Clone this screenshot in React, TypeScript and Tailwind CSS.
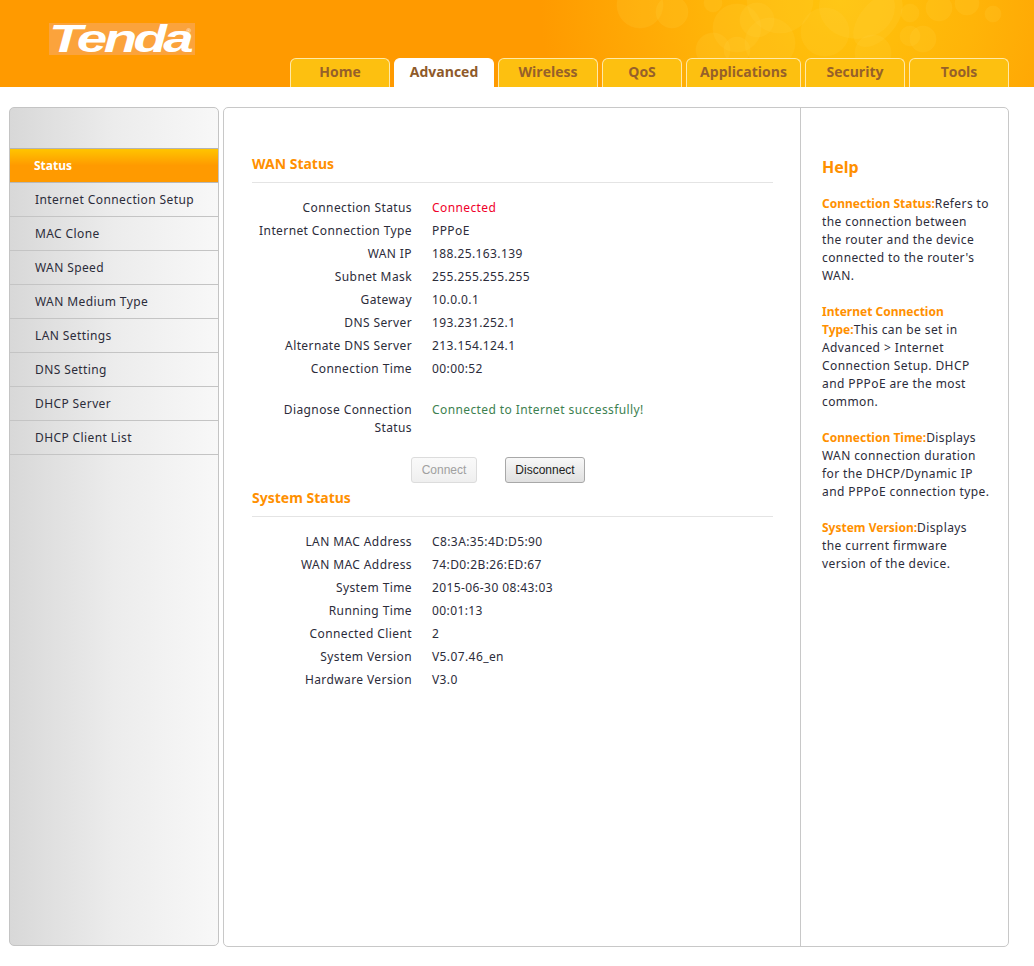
import React from "react";

const tabs = [
  { name: "Home", w: "w-[100px]" },
  { name: "Advanced", w: "w-[100px]", active: true },
  { name: "Wireless", w: "w-[100px]" },
  { name: "QoS", w: "w-[80px]" },
  { name: "Applications", w: "w-[115px]" },
  { name: "Security", w: "w-[100px]" },
  { name: "Tools", w: "w-[100px]" },
];

const menu = [
  "Internet Connection Setup",
  "MAC Clone",
  "WAN Speed",
  "WAN Medium Type",
  "LAN Settings",
  "DNS Setting",
  "DHCP Server",
  "DHCP Client List",
];

// cx, cy, r of the pale rings in the header artwork
const bubbles = [
  [640, 5, 23], [672, 12, 16], [737, 28, 24], [757, 20, 17], [713, 50, 17], [737, 50, 13], [770, 43, 25],
  [825, 32, 24], [780, 0, 33], [873, 53, 18], [910, 13, 9], [939, 8, 13], [967, 3, 12], [993, 14, 8],
  [910, 36, 10], [923, 39, 13], [713, 3, 9],
];

const Row = ({ label, children }: { label: string; children: React.ReactNode }) => (
  <div className="flex h-[23px] items-center">
    <div className="w-[160px] text-right">{label}</div>
    <div className="ml-5">{children}</div>
  </div>
);

const Heading = ({ title }: { title: string }) => (
  <h2 className="h-[26px] border-b border-[#e4e4e4] text-[14px] font-bold leading-[14px] tracking-normal text-[#ff9000]">{title}</h2>
);

const HelpItem = ({ title, children }: { title: string; children: React.ReactNode }) => (
  <p className="mb-[18px]">
    <span className="font-bold tracking-normal text-[#ff9000]">{title}</span>
    {children}
  </p>
);

export default function App() {
  return (
    <div className="h-[966px] w-[1034px] overflow-hidden bg-white font-['Noto_Sans',sans-serif] text-[12px] tracking-[0.4px] text-[#2c2c3a]">
      <header className="relative flex h-[87px] items-end bg-[#ff9a00] pl-[290px]">
        <svg className="absolute inset-0" width="1034" height="87" viewBox="0 0 1034 87">
          <defs>
            <radialGradient id="glow" cx="840" cy="0" r="300" gradientUnits="userSpaceOnUse" gradientTransform="translate(0 0) scale(1 1)">
              <stop offset="0" stopColor="#ffc40c" />
              <stop offset="0.45" stopColor="#ffb408" />
              <stop offset="1" stopColor="#ff9a00" />
            </radialGradient>
          </defs>
          <rect width="1034" height="87" fill="url(#glow)" />
          <ellipse cx="857" cy="7" rx="38" ry="32" fill="#ffd23a" opacity="0.22" />
          <ellipse cx="878" cy="20" rx="18" ry="32" transform="rotate(40 878 20)" fill="#ffd23a" opacity="0.2" />
          {bubbles.map(([cx, cy, r], i) => (
            <circle key={i} cx={cx} cy={cy} r={r} fill="#ffd23a" opacity="0.2" stroke="#ffd65a" strokeOpacity="0.4" />
          ))}
        </svg>
        <div className="absolute left-[49px] top-[23px] flex h-[32px] w-[146px] items-center bg-[#fba33c]">
          <span className="origin-left scale-x-[1.44] font-['Liberation_Sans',sans-serif] text-[38px] font-bold italic leading-none tracking-[-2.5px] text-white">
            Tenda
          </span>
          <span className="absolute right-[4px] top-[5px] font-['Liberation_Sans',sans-serif] text-[6px] leading-none tracking-normal text-white">®</span>
        </div>
        <nav className="relative flex gap-[4px]">
          {tabs.map((t) => (
            <a
              key={t.name}
              className={`flex h-[29px] items-center justify-center rounded-t-[6px] border border-b-0 pb-[3px] font-['Open_Sans',sans-serif] text-[14px] font-bold tracking-normal ${t.w} ${
                t.active ? "border-white bg-white text-[#8e5a2a]" : "border-[#ffe9a8] bg-[#fdc010] text-[#96602a]"
              }`}
            >
              {t.name}
            </a>
          ))}
        </nav>
      </header>

      <div className="mt-[20px] flex gap-[4px] pl-[9px]">
        <aside className="flex h-[839px] w-[210px] flex-col overflow-hidden rounded-[5px] border border-[#c4c4c4] bg-gradient-to-r from-[#d8d8d8] via-[#ececec] to-[#f8f8f8]">
          <div className="h-[41px] border-b border-[#b4b4b4]" />
          <div className="flex h-[34px] items-center border-b border-[#b8b8b8] bg-gradient-to-b from-[#ffc400] via-[#ff9a00] to-[#ff9a00] pl-[24px] font-bold tracking-normal text-white">
            Status
          </div>
          {menu.map((m) => (
            <div key={m} className="flex h-[34px] items-center border-b border-[#c4c4c4] pl-[25px]">
              {m}
            </div>
          ))}
        </aside>

        <main className="flex h-[840px] w-[786px] rounded-[5px] border border-[#c8c8c8]">
          <section className="w-[576px] pl-[28px] pt-[49px]">
            <div className="w-[521px]">
              <Heading title="WAN Status" />
              <div className="mt-[13px]">
                <Row label="Connection Status"><span className="text-[#f0002a]">Connected</span></Row>
                <Row label="Internet Connection Type">PPPoE</Row>
                <Row label="WAN IP">188.25.163.139</Row>
                <Row label="Subnet Mask">255.255.255.255</Row>
                <Row label="Gateway">10.0.0.1</Row>
                <Row label="DNS Server">193.231.252.1</Row>
                <Row label="Alternate DNS Server">213.154.124.1</Row>
                <Row label="Connection Time">00:00:52</Row>
              </div>
              <div className="mt-[21px] flex leading-[18px]">
                <div className="w-[160px] text-right">Diagnose Connection Status</div>
                <div className="ml-5 text-[#3d7f50]">Connected to Internet successfully!</div>
              </div>
              <div className="mt-[20px] flex pl-[159px] font-['Liberation_Sans',sans-serif] tracking-normal">
                <button className="h-[26px] w-[66px] rounded-[3px] border border-[#dcdcdc] bg-gradient-to-b from-[#fafafa] to-[#efefef] text-[#a0a0a0]">
                  Connect
                </button>
                <button className="ml-[28px] h-[26px] w-[80px] rounded-[3px] border border-[#a8a8a8] bg-gradient-to-b from-[#f8f8f8] to-[#e0e0e0] text-[#222]">
                  Disconnect
                </button>
              </div>
              <div className="mt-[8px]">
                <Heading title="System Status" />
              </div>
              <div className="mt-[13px]">
                <Row label="LAN MAC Address">C8:3A:35:4D:D5:90</Row>
                <Row label="WAN MAC Address">74:D0:2B:26:ED:67</Row>
                <Row label="System Time">2015-06-30 08:43:03</Row>
                <Row label="Running Time">00:01:13</Row>
                <Row label="Connected Client">2</Row>
                <Row label="System Version">V5.07.46_en</Row>
                <Row label="Hardware Version">V3.0</Row>
              </div>
            </div>
          </section>
          <section className="flex-1 border-l border-[#c8c8c8] pl-[21px] pr-[18px] pt-[49px] leading-[18px]">
            <h2 className="mb-[18px] text-[16px] font-bold leading-[20px] tracking-normal text-[#ff9000]">Help</h2>
            <HelpItem title="Connection Status:">Refers to the connection between the router and the device connected to the router's WAN.</HelpItem>
            <HelpItem title="Internet Connection Type:">This can be set in Advanced &gt; Internet Connection Setup. DHCP and PPPoE are the most common.</HelpItem>
            <HelpItem title="Connection Time:">Displays WAN connection duration for the DHCP/Dynamic IP and PPPoE connection type.</HelpItem>
            <HelpItem title="System Version:">Displays the current firmware version of the device.</HelpItem>
          </section>
        </main>
      </div>
    </div>
  );
}
